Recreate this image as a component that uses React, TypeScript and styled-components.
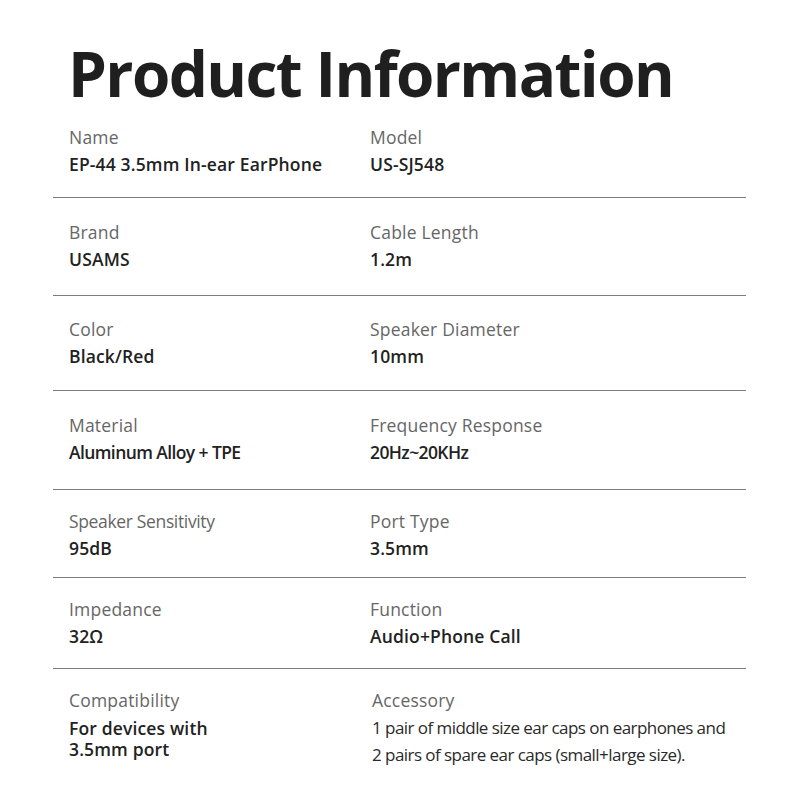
import React from "react";
import styled, { createGlobalStyle } from "styled-components";

const Global = createGlobalStyle`
  html, body { margin: 0; padding: 0; background: #ffffff; }
  body { font-family: "Open Sans", "Noto Sans", sans-serif; }
`;

const Page = styled.div`
  width: 800px;
  height: 800px;
  box-sizing: border-box;
  padding: 37px 54px 0 53px;
  background: #fff;
`;

const Title = styled.h1`
  margin: 0 0 0 15px;
  font-family: "Open Sans", "Noto Sans", sans-serif;
  font-weight: 700;
  font-size: 62px;
  line-height: 72px;
  letter-spacing: -1.6px;
  color: #1f1f1f;
  white-space: nowrap;
`;

const Table = styled.div`
  display: flex;
  flex-direction: column;
  margin-top: 17px;
`;

const Row = styled.div<{ $pt: number; $pb: number; $last?: boolean }>`
  display: grid;
  grid-template-columns: 301px 1fr;
  padding: ${(p) => p.$pt}px 0 ${(p) => p.$pb}px 16px;
  border-bottom: ${(p) => (p.$last ? "none" : "1.5px solid #7d7d7d")};
`;

const Cell = styled.div<{ $shift?: number }>`
  display: flex;
  flex-direction: column;
  gap: 4px;
  padding-left: ${(p) => p.$shift ?? 0}px;
`;

const Label = styled.div<{ $tight?: boolean }>`
  font-size: 17.5px;
  line-height: 23px;
  font-weight: 500;
  color: #666666;
  letter-spacing: ${(p) => (p.$tight ? "-0.35px" : "0.2px")};
  white-space: nowrap;
`;

const Value = styled.div<{ $tight?: boolean; $lh?: number; $mt?: number }>`
  font-size: 17.5px;
  line-height: ${(p) => p.$lh ?? 23}px;
  font-weight: 600;
  color: #222222;
  letter-spacing: ${(p) => (p.$tight ? "-0.6px" : "0.15px")};
  white-space: nowrap;
  margin-top: ${(p) => p.$mt ?? 0}px;
`;

const Note = styled.div`
  font-size: 17px;
  line-height: 27px;
  font-weight: 400;
  color: #2a2a2a;
  letter-spacing: -0.55px;
  white-space: nowrap;
  margin-top: -2px;
`;

type Item = { label: string; value: React.ReactNode; tightLabel?: boolean; tightValue?: boolean };

const rows: { left: Item; right: Item; pt: number; pb: number }[] = [
  { left: { label: "Name", value: "EP-44 3.5mm In-ear EarPhone" }, right: { label: "Model", value: "US-SJ548" }, pt: 0, pb: 21 },
  { left: { label: "Brand", value: "USAMS" }, right: { label: "Cable Length", value: "1.2m" }, pt: 23, pb: 24 },
  { left: { label: "Color", value: "Black/Red" }, right: { label: "Speaker Diameter", value: "10mm" }, pt: 22, pb: 22 },
  { left: { label: "Material", value: "Aluminum Alloy + TPE", tightValue: true }, right: { label: "Frequency Response", value: "20Hz~20KHz", tightValue: true }, pt: 23, pb: 25 },
  { left: { label: "Speaker Sensitivity", value: "95dB", tightLabel: true }, right: { label: "Port Type", value: "3.5mm" }, pt: 20, pb: 17 },
  { left: { label: "Impedance", value: "32Ω" }, right: { label: "Function", value: "Audio+Phone Call" }, pt: 20, pb: 20 },
];

export default function App() {
  return (
    <>
      <Global />
      <Page>
        <Title>Product Information</Title>
        <Table>
          {rows.map((r, i) => (
            <Row key={i} $pt={r.pt} $pb={r.pb}>
              <Cell>
                <Label $tight={r.left.tightLabel}>{r.left.label}</Label>
                <Value $tight={r.left.tightValue}>{r.left.value}</Value>
              </Cell>
              <Cell>
                <Label $tight={r.right.tightLabel}>{r.right.label}</Label>
                <Value $tight={r.right.tightValue}>{r.right.value}</Value>
              </Cell>
            </Row>
          ))}
          <Row $pt={20} $pb={0} $last>
            <Cell>
              <Label>Compatibility</Label>
              <Value $lh={21} $mt={2}>
                For devices with
                <br />
                3.5mm port
              </Value>
            </Cell>
            <Cell $shift={2}>
              <Label>Accessory</Label>
              <Note>
                1 pair of middle size ear caps on earphones and
                <br />
                2 pairs of spare ear caps (small+large size).
              </Note>
            </Cell>
          </Row>
        </Table>
      </Page>
    </>
  );
}
